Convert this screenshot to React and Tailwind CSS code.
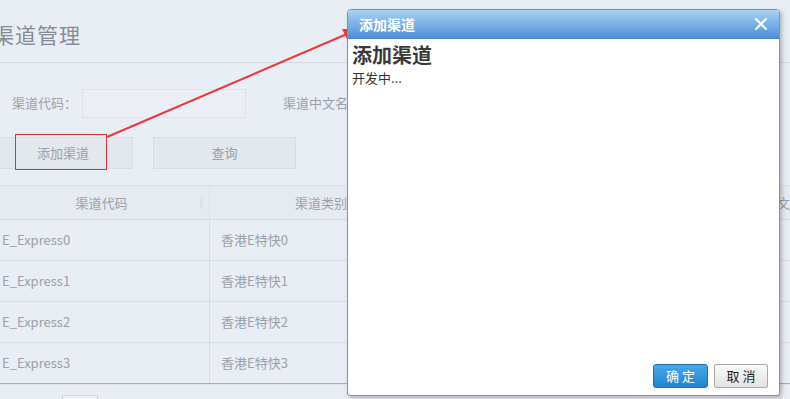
import * as React from "react";

const rows = [
  { code: "E_Express0", type: "香港E特快0" },
  { code: "E_Express1", type: "香港E特快1" },
  { code: "E_Express2", type: "香港E特快2" },
  { code: "E_Express3", type: "香港E特快3" },
];

const font = { fontFamily: '"Noto Sans CJK SC", "Noto Sans", sans-serif' };

const App = () => {
  return (
    <main
      className="relative w-[790px] h-[399px] overflow-hidden bg-[#e9edf4] text-[#9ba1ab]"
      style={font}
    >
      {/* Page behind the dialog */}
      <h1 className="pt-[19px] -ml-[7px] text-[21px] leading-[30px] text-[#868c96] tracking-[1px]">
        渠道管理
      </h1>
      <div className="mt-[13px] h-px bg-[#d3d8e0]" />

      <div className="flex items-center h-[30px] mt-[25px] text-[13px]">
        <span className="pl-[12px] w-[82px]">渠道代码：</span>
        <div className="w-[164px] h-[29px] border border-dotted border-[#d2d6de] bg-[#ebeff5]" />
        <span className="ml-[37px]">渠道中文名</span>
      </div>

      <div className="flex mt-[19px] text-[13px]">
        <div className="-ml-[9px] w-[142px] h-[32px] flex items-center justify-center border border-[#d8dce3] bg-[#e3e7ee] pl-[2px]">
          添加渠道
        </div>
        <div className="ml-[20px] w-[143px] h-[32px] flex items-center justify-center border border-[#d8dce3] bg-[#e3e7ee]">
          查询
        </div>
      </div>

      <div className="mt-[16px] border-t border-[#d9dde4] text-[13px]">
        <div className="flex h-[34px] border-b border-[#d6dae2] bg-[#e6eaf1]">
          <div className="relative w-[210px] flex items-center justify-center pr-[6px] border-r border-[#dde1e8]">
            渠道代码
            <span className="absolute right-[6px] top-[11px] w-[3px] h-[12px] bg-[#dde1e8]" />
          </div>
          <div className="w-[222px] flex items-center justify-center">渠道类别</div>
          <div className="w-[358px] flex items-center justify-end -mr-[4px]">渠道中文</div>
        </div>
        {rows.map((r) => (
          <div key={r.code} className="flex h-[41px] border-b border-[#d9dde4] bg-[#e9edf4]">
            <div className="w-[210px] flex items-center pl-[2px] border-r border-[#d9dde4]">{r.code}</div>
            <div className="flex items-center pl-[11px]">{r.type}</div>
          </div>
        ))}
        <div className="-mt-px h-[2px] border-t border-[#a8adb6] bg-[#dfe3ea]" />
        <div className="ml-[62px] mt-[10px] w-[36px] h-[4px] border-t border-x border-[#d3d7de] bg-[#f0f2f6]" />
      </div>

      {/* Annotation */}
      <div className="absolute left-[15px] top-[134px] w-[92px] h-[36px] border border-[#d8363c]" />
      <svg className="absolute left-0 top-0" width="790" height="399">
        <line x1="107" y1="137" x2="347" y2="34" stroke="#e8393f" strokeWidth="2" />
        <polygon points="358,29 342,29 348,41" fill="#e8393f" />
      </svg>

      {/* Dialog */}
      <div className="absolute left-[347px] top-[9px] w-[433px] h-[387px] flex flex-col rounded-t-[4px] rounded-b-[3px] border border-[#8b929b] bg-white shadow-[2px_2px_4px_rgba(0,0,0,0.25)] overflow-hidden">
        <div className="h-[29px] shrink-0 flex items-center justify-between pl-[11px] pr-[12px] border-b border-[#4a84c4] bg-gradient-to-b from-[#a9d2f3] to-[#4e90d8]">
          <span className="text-white text-[14px] font-bold leading-none">添加渠道</span>
          <svg width="12" height="12" viewBox="0 0 12 12">
            <path d="M1 1 L11 11 M11 1 L1 11" stroke="white" strokeWidth="2" strokeLinecap="round" />
          </svg>
        </div>
        <div className="flex-1 flex flex-col px-[4px] pt-[2px] text-[#333]">
          <h2 className="text-[20px] font-bold leading-[28px] text-[#3a3a3a]">添加渠道</h2>
          <p className="text-[13px] leading-[18px]">开发中...</p>
          <div className="mt-auto mb-[7px] flex justify-end gap-[6px] pr-[7px]">
            <button className="w-[55px] h-[24px] rounded-[3px] border border-[#1f6fae] bg-gradient-to-b from-[#47a8e6] to-[#1f86d1] text-white text-[13px] tracking-[3px] pl-[3px]">
              确定
            </button>
            <button className="w-[54px] h-[24px] rounded-[2px] border border-[#a9a9a9] bg-gradient-to-b from-[#fafafa] to-[#e2e2e2] text-[#222] text-[13px] tracking-[3px] pl-[3px]">
              取消
            </button>
          </div>
        </div>
      </div>
    </main>
  );
};

export default App;
